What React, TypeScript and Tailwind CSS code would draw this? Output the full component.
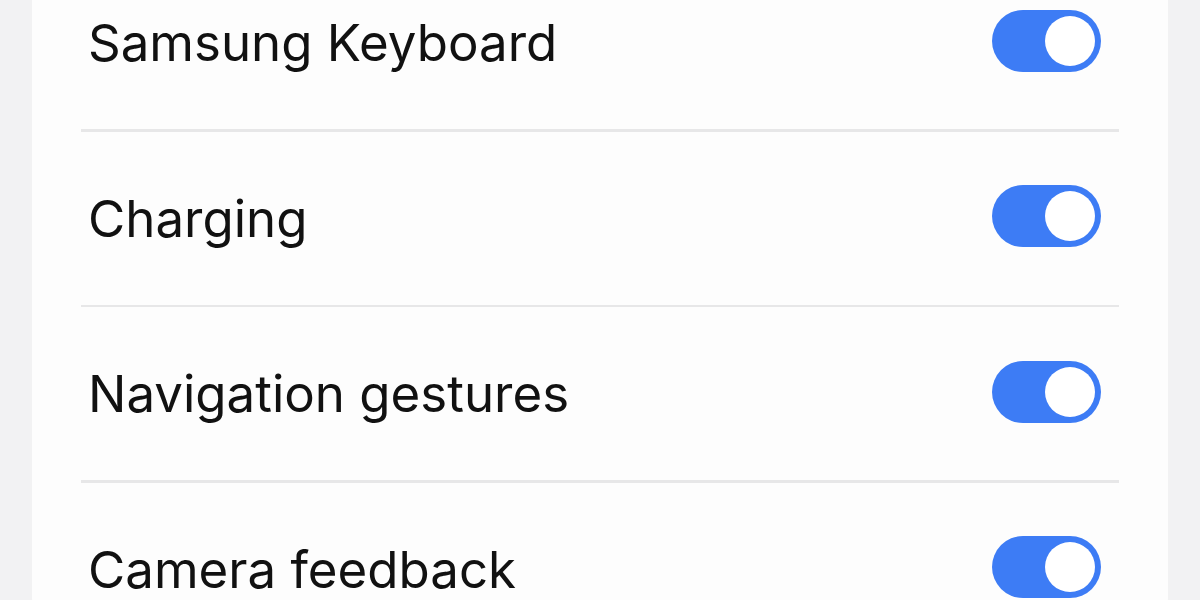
const items = ["Samsung Keyboard", "Charging", "Navigation gestures", "Camera feedback"];

function Toggle() {
  return (
    <div className="relative mb-[4px] h-[62px] w-[109px] shrink-0 rounded-full bg-[#3d7cf5]">
      <div className="absolute right-[6px] top-[6px] h-[50px] w-[50px] rounded-full bg-white" />
    </div>
  );
}

export default function App() {
  return (
    <div className="h-[600px] w-[1200px] overflow-hidden bg-[#f2f2f3] px-[32px]" style={{ fontFamily: "Inter, 'Noto Sans', sans-serif" }}>
      <div className="-mt-[44px] rounded-b-[60px] bg-[#fdfdfd] px-[49px]">
        {items.map((label, i) => (
          <div key={label}>
            {i > 0 && <div className="h-[2.5px] bg-[#e7e7e8]" />}
            <div className="flex h-[173px] items-center justify-between pl-[7px] pr-[18px]">
              <span className="text-[51px] leading-none text-[#111111]">{label}</span>
              <Toggle />
            </div>
          </div>
        ))}
      </div>
    </div>
  );
}
